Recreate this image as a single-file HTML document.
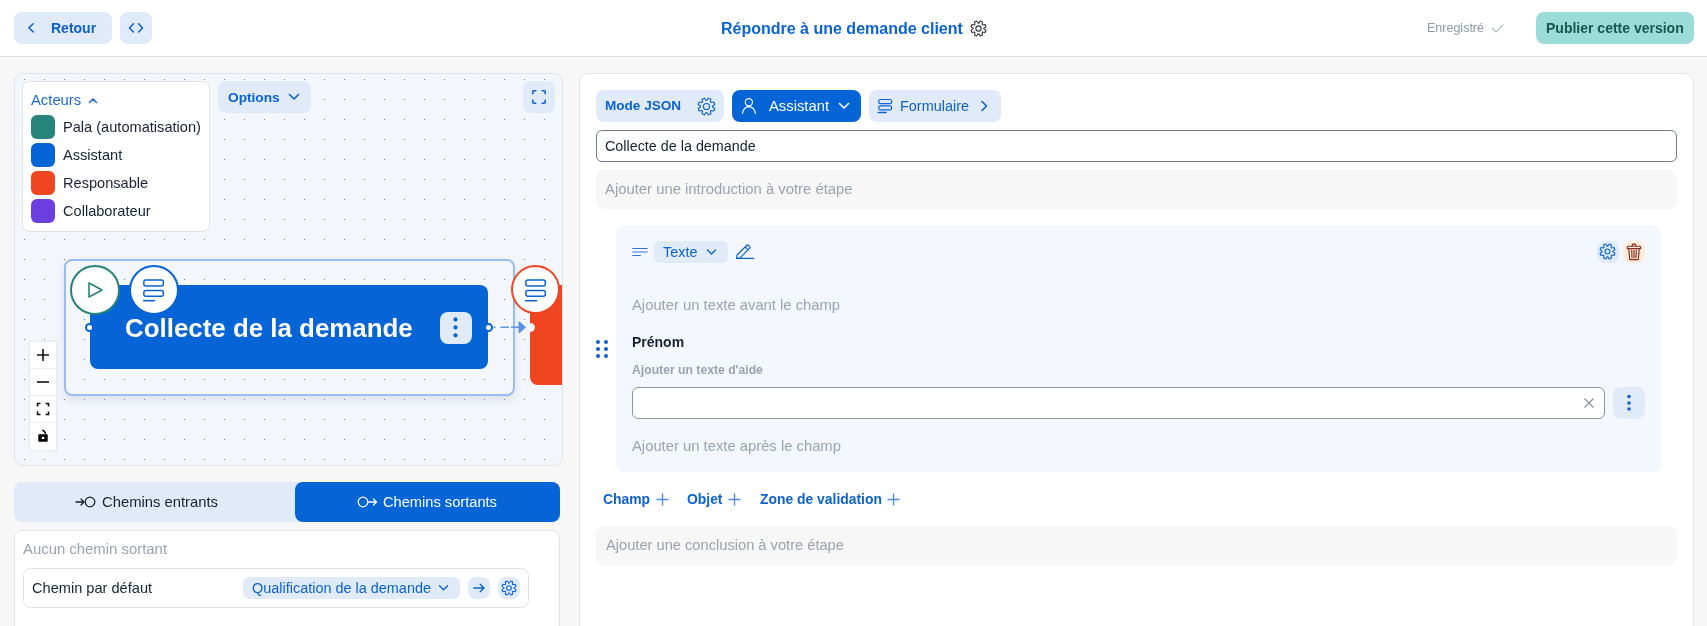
<!DOCTYPE html>
<html><head><meta charset="utf-8">
<style>
*{box-sizing:border-box;margin:0;padding:0}
html,body{width:1707px;height:626px;overflow:hidden;background:#f7f7f7;font-family:"Liberation Sans",sans-serif;}
.a{position:absolute}
.t{position:absolute;white-space:nowrap;line-height:20px;will-change:transform}
.btn{position:absolute;background:#e1eaf8;border-radius:8px}
svg{display:block;overflow:visible}
</style></head><body>
<!-- HEADER -->
<div class="a" style="left:0;top:0;width:1707px;height:57px;background:#fff;border-bottom:1px solid #dde1e7"></div>
<div class="btn" style="left:14px;top:12px;width:98px;height:32px"></div>
<svg class="a" style="left:26px;top:22px" width="10" height="12" viewBox="0 0 10 12"><path d="M7.2 1.7 L2.8 5.8 L7.2 9.9" fill="none" stroke="#0b63d1" stroke-width="1.5" stroke-linecap="round" stroke-linejoin="round"/></svg>
<div class="t" style="left:51px;top:18px;font-size:14px;font-weight:bold;color:#0b63d1">Retour</div>
<div class="btn" style="left:120px;top:12px;width:32px;height:32px"></div>
<svg class="a" style="left:128px;top:22px" width="16" height="12" viewBox="0 0 16 12"><path d="M5.4 1.8 L1.5 5.9 L5.4 10 M10.6 1.8 L14.5 5.9 L10.6 10" fill="none" stroke="#0b63d1" stroke-width="1.5" stroke-linecap="round" stroke-linejoin="round"/></svg>

<div class="t" style="left:721px;top:19px;font-size:16px;font-weight:bold;color:#0b63d1">Répondre à une demande client</div>
<svg class="a" style="left:970px;top:19.5px" width="17" height="17" viewBox="0 0 18 18"><path d="M16.88 10.89 L15.91 13.23 L13.30 12.74 L12.74 13.30 L13.23 15.91 L10.89 16.88 L9.40 14.69 L8.60 14.69 L7.11 16.88 L4.77 15.91 L5.26 13.30 L4.70 12.74 L2.09 13.23 L1.12 10.89 L3.31 9.40 L3.31 8.60 L1.12 7.11 L2.09 4.77 L4.70 5.26 L5.26 4.70 L4.77 2.09 L7.11 1.12 L8.60 3.31 L9.40 3.31 L10.89 1.12 L13.23 2.09 L12.74 4.70 L13.30 5.26 L15.91 4.77 L16.88 7.11 L14.69 8.60 L14.69 9.40Z" fill="none" stroke="#2f343b" stroke-width="1.15" stroke-linejoin="round"/><circle cx="9" cy="9" r="2.8" fill="none" stroke="#2f343b" stroke-width="1.15"/></svg>

<div class="t" style="left:1427px;top:20px;font-size:12.5px;line-height:16px;color:#8e98a6">Enregistré</div>
<svg class="a" style="left:1491px;top:23px" width="13" height="10" viewBox="0 0 13 10"><path d="M1.5 5.5 L5 9 L12 2" fill="none" stroke="#97a0ac" stroke-width="1.05" stroke-linecap="round" stroke-linejoin="round"/></svg>
<div class="a" style="left:1536px;top:12px;width:158px;height:32px;background:#9bdbd8;border-radius:8px"></div>
<div class="t" style="left:1546px;top:18px;font-size:14px;font-weight:bold;color:#1a5550">Publier cette version</div>

<!-- LEFT CANVAS -->
<div class="a" id="canvas" style="left:14px;top:73px;width:549px;height:393px;background:#f3f6fb;border:1px solid #e0e3e9;border-radius:9px;overflow:hidden">
  <svg class="a" style="left:-1px;top:-1px" width="549" height="393"><defs><pattern id="dots" x="10" y="6" width="20" height="20" patternUnits="userSpaceOnUse"><rect x="0" y="0" width="1" height="1" fill="#7d828a"/></pattern></defs><rect width="549" height="393" fill="url(#dots)" shape-rendering="crispEdges"/></svg>
</div>

<!-- actors -->
<div class="a" style="left:22px;top:81px;width:188px;height:151px;background:#fff;border:1px solid #dfe3e9;border-radius:8px"></div>
<div class="t" style="left:31px;top:90px;font-size:14.8px;color:#1a6ad4">Acteurs</div>
<svg class="a" style="left:88px;top:97px" width="10" height="7" viewBox="0 0 10 7"><path d="M1.5 5.5 L5 2 L8.5 5.5" fill="none" stroke="#1a6ad4" stroke-width="1.5" stroke-linecap="round" stroke-linejoin="round"/></svg>
<div class="a" style="left:31px;top:115px;width:24px;height:24px;border-radius:6px;background:#26847a"></div>
<div class="a" style="left:31px;top:143px;width:24px;height:24px;border-radius:6px;background:#0565d6"></div>
<div class="a" style="left:31px;top:171px;width:24px;height:24px;border-radius:6px;background:#ef4520"></div>
<div class="a" style="left:31px;top:199px;width:24px;height:24px;border-radius:6px;background:#6c3ee0"></div>
<div class="t" style="left:63px;top:117px;font-size:14.6px;color:#182332">Pala (automatisation)</div>
<div class="t" style="left:63px;top:145px;font-size:14.6px;color:#182332">Assistant</div>
<div class="t" style="left:63px;top:173px;font-size:14.6px;color:#182332">Responsable</div>
<div class="t" style="left:63px;top:201px;font-size:14.6px;color:#182332">Collaborateur</div>
<!-- options -->
<div class="btn" style="left:218px;top:81px;width:93px;height:32px"></div>
<div class="t" style="left:228px;top:88px;font-size:13.7px;font-weight:bold;color:#0b63d1">Options</div>
<svg class="a" style="left:288px;top:93px" width="12" height="8" viewBox="0 0 12 8"><path d="M1.5 1.5 L6 6 L10.5 1.5" fill="none" stroke="#0b63d1" stroke-width="1.6" stroke-linecap="round" stroke-linejoin="round"/></svg>
<!-- fullscreen -->
<div class="btn" style="left:523px;top:81px;width:32px;height:32px"></div>
<svg class="a" style="left:531px;top:89px" width="16" height="16" viewBox="0 0 16 16"><path d="M1.8 4.8 V2.8 Q1.8 1.8 2.8 1.8 H4.8 M11.2 1.8 H13.2 Q14.2 1.8 14.2 2.8 V4.8 M14.2 11.2 V13.2 Q14.2 14.2 13.2 14.2 H11.2 M4.8 14.2 H2.8 Q1.8 14.2 1.8 13.2 V11.2" fill="none" stroke="#0b63d1" stroke-width="1.6" stroke-linecap="round"/></svg>

<!-- selection outline -->
<div class="a" style="left:64px;top:259px;width:451px;height:137px;border:2px solid #9cbdef;border-radius:8px;box-shadow:0 4px 10px rgba(20,40,80,0.10)"></div>
<!-- orange node (clipped) -->
<div class="a" style="left:15px;top:74px;width:547px;height:391px;overflow:hidden;border-radius:0 8px 8px 0">
  <div class="a" style="left:515px;top:211px;width:60px;height:99.5px;background:#ef4520;border-radius:8px"></div>
  <div class="a" style="left:496px;top:191px;width:49px;height:49px;border-radius:50%;background:#fff;border:2px solid #ef4520"></div>
  <svg class="a" style="left:505px;top:200px" width="32" height="32" viewBox="0 0 32 32"><rect x="5.85" y="6.1" width="19.5" height="6" rx="2" fill="none" stroke="#0b63d1" stroke-width="1.5"/><rect x="5.85" y="16.5" width="19.5" height="5.7" rx="2" fill="none" stroke="#0b63d1" stroke-width="1.5"/><path d="M5.1 26.7 H17.1" stroke="#0b63d1" stroke-width="1.6"/></svg>
  <div class="a" style="left:510.9px;top:248.6px;width:9.5px;height:9.5px;border-radius:50%;background:#fff;border:1.5px solid #d9e6f7"></div>
</div>
<!-- blue node -->
<div class="a" style="left:90px;top:285px;width:398px;height:84px;background:#0565d6;border-radius:8px"></div>
<div class="t" style="left:125px;top:313px;font-size:25.9px;line-height:30px;font-weight:bold;color:#fff">Collecte de la demande</div>
<div class="a" style="left:439.5px;top:311.5px;width:32px;height:32px;background:#e1eaf8;border-radius:8px"></div>
<svg class="a" style="left:451px;top:316px" width="9" height="23" viewBox="0 0 9 23"><circle cx="4.5" cy="3.4" r="2.1" fill="#0b63d1"/><circle cx="4.5" cy="11.4" r="2.1" fill="#0b63d1"/><circle cx="4.5" cy="19.3" r="2.1" fill="#0b63d1"/></svg>
<div class="a" style="left:85px;top:322.8px;width:9px;height:9px;border-radius:50%;background:#fff;border:2px solid #0565d6"></div>
<div class="a" style="left:483.9px;top:322.8px;width:9px;height:9px;border-radius:50%;background:#fff;border:2px solid #0565d6"></div>
<svg class="a" style="left:480px;top:312px" width="50" height="32" viewBox="0 0 50 32"><path d="M13.5 15.3 H40" stroke="#5f93e0" stroke-width="1.6" stroke-dasharray="2 5 8.5 2 8 2"/><path d="M39 10.5 Q38.6 9.6 39.6 10.1 L45.5 15.3 L39.6 20.6 Q38.6 21.1 39 20 Z" fill="#5b8fdf" stroke="#5b8fdf" stroke-width="1" stroke-linejoin="round"/></svg>
<!-- circles -->
<div class="a" style="left:70px;top:265px;width:50px;height:50px;border-radius:50%;background:#fff;border:2px solid #26847a"></div>
<svg class="a" style="left:86px;top:281px" width="18" height="18" viewBox="0 0 18 18"><path d="M3 2 L16 9 L3 16 Z" fill="none" stroke="#26847a" stroke-width="1.6" stroke-linejoin="round"/></svg>
<div class="a" style="left:129px;top:265px;width:50px;height:50px;border-radius:50%;background:#fff;border:2px solid #0565d6"></div>
<svg class="a" style="left:138px;top:274px" width="32" height="32" viewBox="0 0 32 32"><rect x="5.85" y="6.1" width="19.5" height="6" rx="2" fill="none" stroke="#0b63d1" stroke-width="1.5"/><rect x="5.85" y="16.5" width="19.5" height="5.7" rx="2" fill="none" stroke="#0b63d1" stroke-width="1.5"/><path d="M5.1 26.7 H17.1" stroke="#0b63d1" stroke-width="1.6"/></svg>

<!-- controls -->
<div class="a" style="left:30px;top:342px;width:26px;height:108px;background:#fff;box-shadow:0 0 2px 1px rgba(0,0,0,0.07)"></div>
<div class="a" style="left:30px;top:368px;width:26px;height:1px;background:#eeeeee"></div>
<div class="a" style="left:30px;top:395px;width:26px;height:1px;background:#eeeeee"></div>
<div class="a" style="left:30px;top:422px;width:26px;height:1px;background:#eeeeee"></div>
<svg class="a" style="left:35px;top:347px" width="16" height="16" viewBox="0 0 16 16"><path d="M8 2 V14 M2 8 H14" stroke="#111" stroke-width="1.6"/></svg>
<svg class="a" style="left:35px;top:374px" width="16" height="16" viewBox="0 0 16 16"><path d="M2 8 H14" stroke="#111" stroke-width="1.6"/></svg>
<svg class="a" style="left:36px;top:402px" width="14" height="14" viewBox="0 0 14 14"><path d="M1.5 4.5 V1.5 H4.5 M9.5 1.5 H12.5 V4.5 M12.5 9.5 V12.5 H9.5 M4.5 12.5 H1.5 V9.5" fill="none" stroke="#111" stroke-width="1.6"/></svg>
<svg class="a" style="left:32px;top:424px" width="22" height="24" viewBox="0 0 22 24"><rect x="6.3" y="10.2" width="9.4" height="7.6" rx="1" fill="#000"/><rect x="9.8" y="13" width="2.5" height="2" fill="#fff"/><path d="M10.3 6.2 Q13 6.8 13.6 9.8" fill="none" stroke="#000" stroke-width="1.4"/></svg>

<!-- TABS -->
<div class="a" style="left:14px;top:482px;width:546px;height:40px;background:#e1eaf8;border-radius:8px"></div>
<div class="a" style="left:295px;top:482px;width:265px;height:40px;background:#0565d6;border-radius:8px"></div>
<svg class="a" style="left:75px;top:494px" width="21" height="16" viewBox="0 0 21 16"><path d="M1 8 H9 M6 5 L9 8 L6 11" fill="none" stroke="#182332" stroke-width="1.3" stroke-linecap="round" stroke-linejoin="round"/><circle cx="15" cy="8" r="4.8" fill="none" stroke="#182332" stroke-width="1.3"/></svg>
<div class="t" style="left:102px;top:492px;font-size:14.8px;color:#182332">Chemins entrants</div>
<svg class="a" style="left:357px;top:494px" width="21" height="16" viewBox="0 0 21 16"><circle cx="6" cy="8" r="4.8" fill="none" stroke="#fff" stroke-width="1.3"/><path d="M11.5 8 H19.5 M16.5 5 L19.5 8 L16.5 11" fill="none" stroke="#fff" stroke-width="1.3" stroke-linecap="round" stroke-linejoin="round"/></svg>
<div class="t" style="left:383px;top:492px;font-size:14.65px;color:#fff">Chemins sortants</div>
<!-- paths card -->
<div class="a" style="left:14px;top:530px;width:546px;height:120px;background:#fff;border:1px solid #e1e4e9;border-radius:8px"></div>
<div class="t" style="left:23px;top:539px;font-size:14.9px;color:#9aa3af">Aucun chemin sortant</div>
<div class="a" style="left:23px;top:568px;width:506px;height:40px;background:#fff;border:1px solid #dfe3e9;border-radius:8px"></div>
<div class="t" style="left:32px;top:578px;font-size:14.6px;color:#182332">Chemin par défaut</div>
<div class="a" style="left:243px;top:577px;width:217px;height:22px;background:#e1eaf8;border-radius:6px"></div>
<div class="t" style="left:252px;top:578px;font-size:14.44px;color:#0b63d1">Qualification de la demande</div>
<svg class="a" style="left:438px;top:584px" width="11" height="8" viewBox="0 0 11 8"><path d="M1.5 1.8 L5.5 5.8 L9.5 1.8" fill="none" stroke="#0b63d1" stroke-width="1.35" stroke-linecap="round" stroke-linejoin="round"/></svg>
<div class="a" style="left:468px;top:577px;width:22px;height:22px;background:#e1eaf8;border-radius:8px"></div>
<svg class="a" style="left:472px;top:581px" width="14" height="14" viewBox="0 0 14 14"><path d="M1.8 7 H12 M8.2 3.2 L12 7 L8.2 10.8" fill="none" stroke="#0b63d1" stroke-width="1.4" stroke-linecap="round" stroke-linejoin="round"/></svg>
<div class="a" style="left:498px;top:577px;width:22px;height:22px;background:#e1eaf8;border-radius:8px"></div>
<svg class="a" style="left:501px;top:580px" width="16" height="16" viewBox="0 0 18 18"><path d="M16.88 10.89 L15.91 13.23 L13.30 12.74 L12.74 13.30 L13.23 15.91 L10.89 16.88 L9.40 14.69 L8.60 14.69 L7.11 16.88 L4.77 15.91 L5.26 13.30 L4.70 12.74 L2.09 13.23 L1.12 10.89 L3.31 9.40 L3.31 8.60 L1.12 7.11 L2.09 4.77 L4.70 5.26 L5.26 4.70 L4.77 2.09 L7.11 1.12 L8.60 3.31 L9.40 3.31 L10.89 1.12 L13.23 2.09 L12.74 4.70 L13.30 5.26 L15.91 4.77 L16.88 7.11 L14.69 8.60 L14.69 9.40Z" fill="none" stroke="#0b63d1" stroke-width="1.2" stroke-linejoin="round"/><circle cx="9" cy="9" r="2.6" fill="none" stroke="#0b63d1" stroke-width="1.2"/></svg>

<!-- RIGHT PANEL -->
<div class="a" style="left:579px;top:73px;width:1115px;height:600px;background:#fff;border:1px solid #e1e4e9;border-radius:9px"></div>
<div class="btn" style="left:596px;top:90px;width:128px;height:32px"></div>
<div class="t" style="left:605px;top:96px;font-size:13.55px;font-weight:bold;color:#0b63d1">Mode JSON</div>
<svg class="a" style="left:696.5px;top:96.5px" width="19" height="19" viewBox="0 0 18 18"><path d="M16.88 10.89 L15.91 13.23 L13.30 12.74 L12.74 13.30 L13.23 15.91 L10.89 16.88 L9.40 14.69 L8.60 14.69 L7.11 16.88 L4.77 15.91 L5.26 13.30 L4.70 12.74 L2.09 13.23 L1.12 10.89 L3.31 9.40 L3.31 8.60 L1.12 7.11 L2.09 4.77 L4.70 5.26 L5.26 4.70 L4.77 2.09 L7.11 1.12 L8.60 3.31 L9.40 3.31 L10.89 1.12 L13.23 2.09 L12.74 4.70 L13.30 5.26 L15.91 4.77 L16.88 7.11 L14.69 8.60 L14.69 9.40Z" fill="none" stroke="#0b63d1" stroke-width="1.05" stroke-linejoin="round"/><circle cx="9" cy="9" r="2.9" fill="none" stroke="#0b63d1" stroke-width="1.05"/></svg>
<div class="a" style="left:732px;top:90px;width:129px;height:32px;background:#0565d6;border-radius:8px"></div>
<svg class="a" style="left:740px;top:97px" width="17" height="17" viewBox="0 0 17 17"><circle cx="8.85" cy="5.2" r="3.6" fill="none" stroke="#fff" stroke-width="1.1"/><path d="M2.4 16.4 Q3.6 9.8 8.9 9.6 Q14 9.8 15.6 16.4" fill="none" stroke="#fff" stroke-width="1.1" stroke-linecap="round"/></svg>
<div class="t" style="left:769px;top:96px;font-size:14.8px;color:#fff">Assistant</div>
<svg class="a" style="left:838px;top:102px" width="12" height="8" viewBox="0 0 12 8"><path d="M1.5 1.5 L6 6 L10.5 1.5" fill="none" stroke="#fff" stroke-width="1.6" stroke-linecap="round" stroke-linejoin="round"/></svg>
<div class="btn" style="left:869px;top:90px;width:132px;height:32px"></div>
<svg class="a" style="left:874px;top:96px" width="22" height="20" viewBox="0 0 22 20"><rect x="4.75" y="3.5" width="12.9" height="4.2" rx="1.6" fill="none" stroke="#0b63d1" stroke-width="1.2"/><rect x="4.75" y="9.9" width="12.9" height="3.9" rx="1.6" fill="none" stroke="#0b63d1" stroke-width="1.2"/><path d="M4.1 16.5 H12.1" stroke="#0b63d1" stroke-width="1.3" stroke-linecap="round"/></svg>
<div class="t" style="left:900px;top:96px;font-size:14.45px;color:#0b63d1">Formulaire</div>
<svg class="a" style="left:980px;top:100px" width="8" height="12" viewBox="0 0 8 12"><path d="M2 1.5 L6.5 6 L2 10.5" fill="none" stroke="#0b63d1" stroke-width="1.6" stroke-linecap="round" stroke-linejoin="round"/></svg>

<div class="a" style="left:596px;top:130px;width:1081px;height:32px;background:#fff;border:1px solid #717b89;border-radius:6px"></div>
<div class="t" style="left:605px;top:136px;font-size:14.35px;color:#182332">Collecte de la demande</div>
<div class="a" style="left:596px;top:170px;width:1081px;height:39px;background:#f7f7f7;border-radius:8px"></div>
<div class="t" style="left:605px;top:179px;font-size:14.85px;color:#9aa3af">Ajouter une introduction à votre étape</div>

<!-- field card -->
<div class="a" style="left:616px;top:225px;width:1045px;height:247px;background:#f4f8fe;border-radius:8px"></div>
<svg class="a" style="left:632px;top:246px" width="16" height="12" viewBox="0 0 16 12"><path d="M0.3 2.5 H15.7 M0.3 6 H15.7 M0.3 9.5 H8.8" stroke="#2f76da" stroke-width="1.1"/></svg>
<div class="btn" style="left:654px;top:241px;width:74px;height:22px;border-radius:6px"></div>
<div class="t" style="left:663px;top:242px;font-size:14.4px;color:#0b63d1">Texte</div>
<svg class="a" style="left:706px;top:248px" width="11" height="8" viewBox="0 0 11 8"><path d="M1.5 2 L5.5 6 L9.5 2" fill="none" stroke="#0b63d1" stroke-width="1.4" stroke-linecap="round" stroke-linejoin="round"/></svg>
<svg class="a" style="left:732px;top:242px" width="24" height="20" viewBox="0 0 24 20"><path d="M4.6 16.3 L5.1 13 L14.6 3.5 Q15.6 2.5 16.6 3.5 L17.5 4.4 Q18.5 5.4 17.5 6.4 L8 15.9 Z M13.2 4.9 L16.1 7.8 M4.4 16.4 H21.7" fill="none" stroke="#0b63d1" stroke-width="1.2" stroke-linejoin="round" stroke-linecap="round"/></svg>
<div class="a" style="left:1597px;top:241px;width:22px;height:22px;background:#e1eaf8;border-radius:8px"></div>
<svg class="a" style="left:1599px;top:243px" width="17" height="17" viewBox="0 0 18 18"><path d="M16.88 10.89 L15.91 13.23 L13.30 12.74 L12.74 13.30 L13.23 15.91 L10.89 16.88 L9.40 14.69 L8.60 14.69 L7.11 16.88 L4.77 15.91 L5.26 13.30 L4.70 12.74 L2.09 13.23 L1.12 10.89 L3.31 9.40 L3.31 8.60 L1.12 7.11 L2.09 4.77 L4.70 5.26 L5.26 4.70 L4.77 2.09 L7.11 1.12 L8.60 3.31 L9.40 3.31 L10.89 1.12 L13.23 2.09 L12.74 4.70 L13.30 5.26 L15.91 4.77 L16.88 7.11 L14.69 8.60 L14.69 9.40Z" fill="none" stroke="#0b63d1" stroke-width="1.15" stroke-linejoin="round"/><circle cx="9" cy="9" r="2.6" fill="none" stroke="#0b63d1" stroke-width="1.15"/></svg>
<div class="a" style="left:1623px;top:241px;width:22px;height:22px;background:#fdedda;border-radius:8px"></div>
<svg class="a" style="left:1623px;top:241px" width="22" height="22" viewBox="0 0 22 22"><path d="M9.3 5 V3.9 Q9.3 3.1 10.1 3.1 H11.9 Q12.7 3.1 12.7 3.9 V5 M4.3 6.3 Q4.3 5.2 5.3 5.2 H16.7 Q17.7 5.2 17.7 6.3 V7.6 H4.3 Z M5.7 7.8 L6.7 18.2 Q6.8 18.6 7.2 18.6 H14.8 Q15.2 18.6 15.3 18.2 L16.3 7.8 M8.7 9.3 L9 16.8 M11 9.3 V16.8 M13.3 9.3 L13 16.8" fill="none" stroke="#8a2a20" stroke-width="1.15" stroke-linejoin="round" stroke-linecap="round"/></svg>

<div class="t" style="left:632px;top:295px;font-size:14.8px;color:#9aa3af">Ajouter un texte avant le champ</div>
<svg class="a" style="left:595px;top:339px" width="14" height="20" viewBox="0 0 14 20"><g fill="#0b63d1"><circle cx="3" cy="3" r="2"/><circle cx="11" cy="3" r="2"/><circle cx="3" cy="10" r="2"/><circle cx="11" cy="10" r="2"/><circle cx="3" cy="17" r="2"/><circle cx="11" cy="17" r="2"/></g></svg>
<div class="t" style="left:632px;top:332px;font-size:14px;font-weight:bold;color:#182332">Prénom</div>
<div class="t" style="left:632px;top:362px;font-size:12.2px;line-height:16px;font-weight:bold;color:#9aa3af">Ajouter un texte d'aide</div>
<div class="a" style="left:632px;top:387px;width:973px;height:32px;background:#fff;border:1px solid #8c95a2;border-radius:6px"></div>
<svg class="a" style="left:1583px;top:397px" width="12" height="12" viewBox="0 0 12 12"><path d="M1.5 1.5 L10.5 10.5 M10.5 1.5 L1.5 10.5" stroke="#858d98" stroke-width="1.1"/></svg>
<div class="a" style="left:1613px;top:387px;width:32px;height:32px;background:#e1eaf8;border-radius:8px"></div>
<svg class="a" style="left:1625px;top:393px" width="8" height="20" viewBox="0 0 8 20"><circle cx="4" cy="3.5" r="1.8" fill="#0b63d1"/><circle cx="4" cy="10" r="1.8" fill="#0b63d1"/><circle cx="4" cy="16" r="1.8" fill="#0b63d1"/></svg>
<div class="t" style="left:632px;top:435.5px;font-size:14.8px;color:#9aa3af">Ajouter un texte après le champ</div>

<!-- add row -->
<div class="t" style="left:603px;top:489px;font-size:13.9px;font-weight:bold;color:#0b63d1">Champ</div>
<svg class="a" style="left:656px;top:493px" width="13" height="13" viewBox="0 0 13 13"><path d="M6.5 0.5 V12.5 M0.5 6.5 H12.5" stroke="#4f8ade" stroke-width="1.4"/></svg>
<div class="t" style="left:687px;top:489px;font-size:13.9px;font-weight:bold;color:#0b63d1">Objet</div>
<svg class="a" style="left:728px;top:493px" width="13" height="13" viewBox="0 0 13 13"><path d="M6.5 0.5 V12.5 M0.5 6.5 H12.5" stroke="#4f8ade" stroke-width="1.4"/></svg>
<div class="t" style="left:760px;top:489px;font-size:13.9px;font-weight:bold;color:#0b63d1">Zone de validation</div>
<svg class="a" style="left:887px;top:493px" width="13" height="13" viewBox="0 0 13 13"><path d="M6.5 0.5 V12.5 M0.5 6.5 H12.5" stroke="#4f8ade" stroke-width="1.4"/></svg>
<div class="a" style="left:596px;top:526px;width:1081px;height:39px;background:#f7f7f7;border-radius:8px"></div>
<div class="t" style="left:606px;top:535.3px;font-size:14.66px;color:#9aa3af">Ajouter une conclusion à votre étape</div>
</body></html>
